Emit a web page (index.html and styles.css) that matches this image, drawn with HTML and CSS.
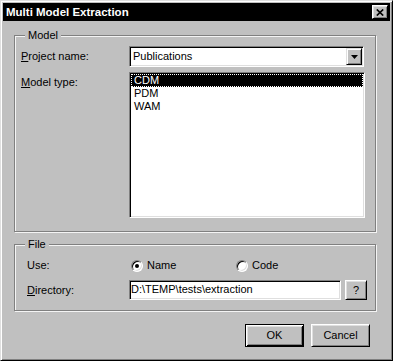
FILE: index.html
```html
<!DOCTYPE html>
<html lang="en">
<head>
    <meta charset="UTF-8">
    <meta name="viewport" content="width=device-width, initial-scale=1.0">
    <title>Multi Model Extraction</title>
    <link rel="stylesheet" href="styles.css">
</head>
<body>
    <div class="window">
        <div class="titlebar">
            <span class="title">Multi Model Extraction</span>
            <span class="close-btn">
                <svg width="8" height="7" viewBox="0 0 8 7">
                    <path d="M0.8 0.5 L7.2 6.5 M7.2 0.5 L0.8 6.5" stroke="#000" stroke-width="1.7" fill="none"/>
                </svg>
            </span>
        </div>

        <div class="content">
            <fieldset class="group">
                <legend>Model</legend>
                <div class="form-grid model-grid">
                    <span class="field-label"><u>P</u>roject name:</span>
                    <div class="combo">
                        <span class="combo-text">Publications</span>
                        <span class="combo-btn">
                            <svg width="7" height="4" viewBox="0 0 7 4"><path d="M0 0h7L3.5 4z" fill="#000"/></svg>
                        </span>
                    </div>

                    <span class="field-label top"><u>M</u>odel type:</span>
                    <ul class="listbox">
                        <li class="selected">CDM</li>
                        <li>PDM</li>
                        <li>WAM</li>
                    </ul>
                </div>
            </fieldset>

            <fieldset class="group group-file">
                <legend>File</legend>
                <div class="form-grid file-grid">
                    <span class="field-label">Use:</span>
                    <div class="radios">
                        <span class="radio-item"><span class="radio checked"></span>Name</span>
                        <span class="radio-item"><span class="radio"></span>Code</span>
                    </div>

                    <span class="field-label"><u>D</u>irectory:</span>
                    <div class="dir-row">
                        <div class="textbox">D:\TEMP\tests\extraction</div>
                        <span class="btn btn-small">?</span>
                    </div>
                </div>
            </fieldset>

            <div class="actions">
                <span class="btn btn-default">OK</span>
                <span class="btn">Cancel</span>
            </div>
        </div>
    </div>
</body>
</html>
```

FILE: styles.css
```css
* {
    box-sizing: border-box;
    margin: 0;
    padding: 0;
}

body {
    font-family: "Liberation Sans", Arial, sans-serif;
    font-size: 11px;
    line-height: 13px;
    color: #000;
    background: #c0c0c0;
}

.window {
    width: 393px;
    height: 361px;
    background: #c0c0c0;
    border: 1px solid;
    border-color: #dfdfdf #000 #000 #dfdfdf;
    box-shadow: inset 1px 1px #fff, inset -1px -1px #808080;
    padding: 2px;
}

.titlebar {
    height: 18px;
    background: #000;
    display: flex;
    align-items: center;
    justify-content: space-between;
    padding: 0 2px 0 3px;
}

.title {
    color: #fff;
    font-weight: bold;
    font-size: 11.5px;
}

.close-btn {
    width: 16px;
    height: 14px;
    display: flex;
    align-items: center;
    justify-content: center;
    background: #c0c0c0;
    border: 1px solid;
    border-color: #fff #000 #000 #fff;
    box-shadow: inset 1px 1px #dfdfdf, inset -1px -1px #808080;
}

.content {
    padding: 8px 0 0 11px;
}

/* group boxes */
.group {
    width: 362px;
    min-width: 0;
    border: 1px solid #808080;
    box-shadow: inset 1px 1px #f4f4f4, 1px 1px #f4f4f4;
}

.group legend {
    margin-left: 10px;
    padding: 0 3px;
    line-height: 13px;
    background: #c0c0c0;
}

.group-file {
    margin-top: 6px;
}

.form-grid {
    display: grid;
    align-items: center;
}

.model-grid {
    grid-template-columns: 108px 235px;
    row-gap: 5px;
    padding: 4px 0 13px 6px;
}

.file-grid {
    grid-template-columns: 102px 238px;
    row-gap: 8px;
    padding: 8px 0 10px 12px;
}

.field-label.top {
    align-self: start;
    margin-top: 4px;
}

/* sunken controls */
.combo,
.listbox,
.textbox {
    background: #fff;
    border: 1px solid;
    border-color: #808080 #fff #fff #808080;
    box-shadow: inset 1px 1px #000, inset -1px -1px #dfdfdf;
    padding: 1px;
}

.combo {
    height: 21px;
    display: flex;
    align-items: center;
}

.combo-text {
    padding-left: 2px;
}

.combo-btn {
    margin-left: auto;
    width: 16px;
    height: 17px;
    display: flex;
    align-items: center;
    justify-content: center;
    background: #c0c0c0;
    border: 1px solid;
    border-color: #dfdfdf #000 #000 #dfdfdf;
    box-shadow: inset 1px 1px #fff, inset -1px -1px #808080;
}

.listbox {
    width: 236px;
    height: 146px;
    list-style: none;
}

.listbox li {
    height: 13px;
    line-height: 13px;
    padding-left: 3px;
}

.listbox li.selected {
    background: #000;
    color: #fff;
    outline: 1px dotted #fff;
    outline-offset: -1px;
}

/* radios */
.radios {
    display: flex;
    padding-left: 2px;
}

.radio-item {
    width: 105px;
    display: flex;
    align-items: center;
    gap: 4px;
}

.radio {
    width: 12px;
    height: 12px;
    border-radius: 50%;
    background: #fff;
    border: 1px solid;
    border-color: #808080 #fff #fff #808080;
    box-shadow: inset 1px 1px #000, inset -1px -1px #dfdfdf;
    display: flex;
    align-items: center;
    justify-content: center;
}

.radio.checked::after {
    content: "";
    width: 4px;
    height: 4px;
    border-radius: 50%;
    background: #000;
}

.dir-row {
    display: flex;
    gap: 4px;
}

.textbox {
    width: 212px;
    height: 20px;
    padding: 2px 1px 0 1px;
    white-space: nowrap;
}

/* buttons */
.btn {
    height: 23px;
    width: 59px;
    display: flex;
    align-items: center;
    justify-content: center;
    background: #c0c0c0;
    border: 1px solid;
    border-color: #fff #000 #000 #fff;
    box-shadow: inset 1px 1px #dfdfdf, inset -1px -1px #808080;
}

.btn-small {
    width: 22px;
    height: 20px;
}

.btn-default {
    border-color: #000;
    box-shadow: inset 1px 1px #fff, inset -1px -1px #000, inset 2px 2px #dfdfdf, inset -2px -2px #808080;
}

.actions {
    width: 362px;
    display: flex;
    justify-content: flex-end;
    gap: 7px;
    padding-right: 6px;
    margin-top: 13px;
}
```
